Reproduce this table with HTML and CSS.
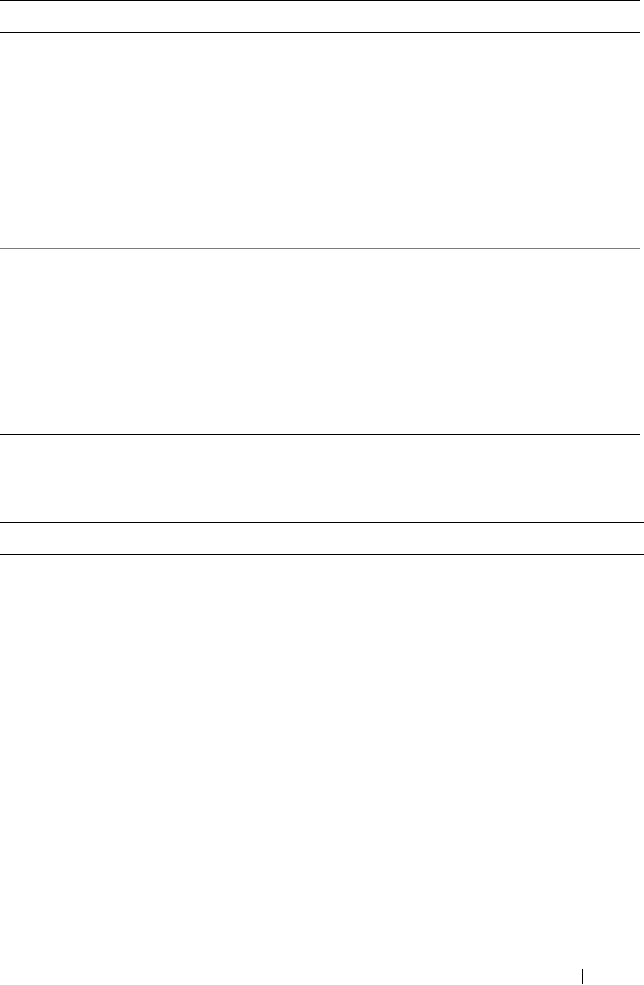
FILE: index.html
```html
<!DOCTYPE html>
<html lang="en">
<head>
    <meta charset="UTF-8">
    <meta name="viewport" content="width=device-width, initial-scale=1.0">
    <title>Page</title>
    <link rel="stylesheet" href="styles.css">
</head>
<body>
    <div class="page">
        <div class="table">
            <div class="row row-head"></div>
            <div class="row row-body"></div>
            <div class="row row-body-last"></div>
        </div>

        <div class="gap"></div>

        <div class="table-wide">
            <div class="row row-head-wide"></div>
        </div>

        <footer class="footer">
            <span class="footer-rule"></span>
        </footer>
    </div>
</body>
</html>
```

FILE: styles.css
```css
:root {
    --rule: #000;
    --rule-soft: #7a7a7a;
}

* {
    margin: 0;
    padding: 0;
    box-sizing: border-box;
}

body {
    font-family: 'Liberation Serif', serif;
    background-color: #fff;
    color: #000;
}

.page {
    width: 644px;
    height: 985px;
    display: flex;
    flex-direction: column;
}

.table {
    width: 640px;
    border-top: 1px solid var(--rule);
}

.row-head {
    height: 32px;
    border-bottom: 1px solid var(--rule);
}

.row-body {
    height: 216px;
    border-bottom: 1px solid var(--rule-soft);
}

.row-body-last {
    height: 186px;
    border-bottom: 1px solid var(--rule);
}

.gap {
    height: 87px;
}

.table-wide {
    width: 644px;
    border-top: 1px solid var(--rule);
}

.row-head-wide {
    height: 32px;
    border-bottom: 1px solid var(--rule);
}

.footer {
    margin-top: auto;
    height: 15px;
    margin-bottom: 1px;
    padding-left: 582px;
}

.footer-rule {
    display: block;
    width: 1px;
    height: 15px;
    background-color: var(--rule);
}
```
